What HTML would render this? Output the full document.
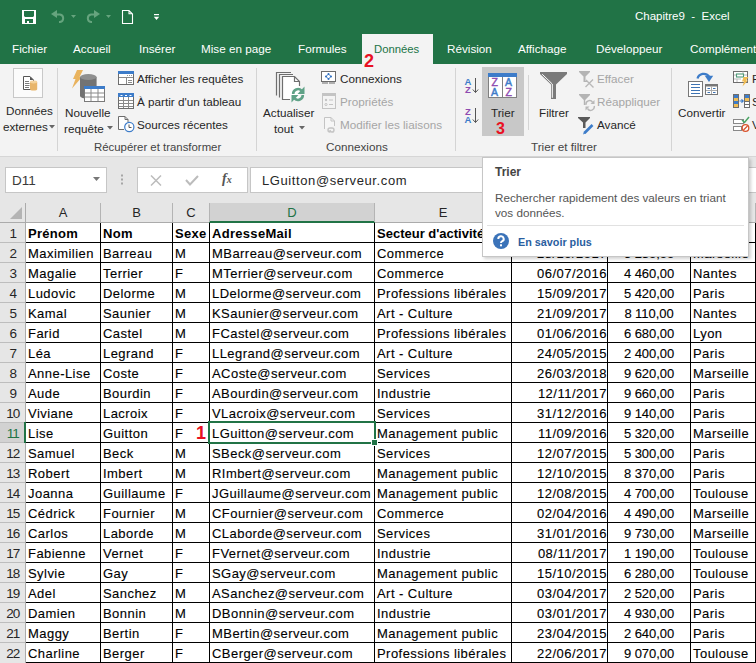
<!DOCTYPE html>
<html><head><meta charset="utf-8">
<style>
*{margin:0;padding:0;box-sizing:content-box}
html,body{width:756px;height:663px;overflow:hidden;background:#e6e6e6;font-family:"Liberation Sans",sans-serif}
.a{position:absolute}
.t{position:absolute;white-space:nowrap;font-size:11.7px;color:#262626;line-height:14px}
.tab{position:absolute;top:41px;white-space:nowrap;font-size:11.7px;color:#fff;line-height:16px}
.dis{color:#a6a6a6}
.hdr{position:absolute;background:#e6e6e6}
.vsep{position:absolute;top:203px;width:1px;height:19px;background:#b4b4b4}
.ch{position:absolute;top:203px;height:19px;line-height:20px;text-align:center;font-size:13px}
.rh{position:absolute;left:0;width:24px;height:19px;line-height:22px;text-align:center;font-size:13.5px;letter-spacing:-0.9px;text-indent:1.6px}
.c{position:absolute;white-space:nowrap;height:19px;line-height:20px;font-size:13px;letter-spacing:0.45px;color:#000;-webkit-text-stroke:0.12px #000}
.c.b{font-weight:bold;font-size:13px;-webkit-text-stroke:0}
.c.r{text-align:right;letter-spacing:0.5px}
.c.m{text-align:center;letter-spacing:-0.05px}
.red{position:absolute;color:#e81123;font-weight:bold;line-height:16px;white-space:nowrap}
.gl{position:absolute;white-space:nowrap;font-size:11.7px;color:#444;line-height:14px}
</style></head><body>
<!-- title bar + tabs -->
<div class="a" style="left:0;top:0;width:756px;height:64px;background:#217346"></div>
<!-- save icon -->
<svg class="a" style="left:22px;top:10px" width="14" height="14" viewBox="0 0 14 14">
<rect x="0" y="0" width="14" height="14" fill="#fff"/>
<path d="M2 1 H12 V6 L11 7 H3 L2 6 Z" fill="#217346"/>
<rect x="3" y="9" width="8" height="4" fill="#217346"/>
<rect x="5" y="11" width="2" height="2" fill="#fff"/>
</svg>
<!-- undo -->
<svg class="a" style="left:50px;top:9px" width="28" height="16" viewBox="0 0 28 16">
<path d="M1 5 L7 1 V9 Z" fill="#66a47e"/>
<path d="M5 5.5 H10 A3.8 3.8 0 0 1 10 13 H9" fill="none" stroke="#66a47e" stroke-width="2"/>
<path d="M21 6 H26 L23.5 9 Z" fill="#66a47e"/>
</svg>
<svg class="a" style="left:85px;top:9px" width="28" height="16" viewBox="0 0 28 16">
<g transform="translate(16,0) scale(-1,1)">
<path d="M1 5 L7 1 V9 Z" fill="#66a47e"/>
<path d="M5 5.5 H10 A3.8 3.8 0 0 1 10 13 H9" fill="none" stroke="#66a47e" stroke-width="2"/>
</g>
<path d="M21 6 H26 L23.5 9 Z" fill="#66a47e"/>
</svg>
<!-- new doc -->
<svg class="a" style="left:121px;top:9px" width="13" height="16" viewBox="0 0 13 16">
<path d="M1.5 1.5 H8 L11.5 5 V14.5 H1.5 Z M8 1.5 V4.8 H11.5" fill="none" stroke="#fff" stroke-width="1.1"/>
</svg>
<svg class="a" style="left:153px;top:14px" width="7" height="7" viewBox="0 0 7 7">
<rect x="1" y="0" width="5" height="1.2" fill="#fff"/><path d="M0.8 2.8 H6.2 L3.5 6 Z" fill="#fff"/>
</svg>
<div class="a" style="left:635px;top:9px;font-size:11.5px;color:#fff;white-space:pre;line-height:14px">Chapitre9  -  Excel</div>
<div class="tab" style="left:12px">Fichier</div>
<div class="tab" style="left:73px">Accueil</div>
<div class="tab" style="left:139px">Insérer</div>
<div class="tab" style="left:201px">Mise en page</div>
<div class="tab" style="left:298px">Formules</div>
<div class="a" style="left:362px;top:34px;width:71px;height:30px;background:#f3f3f3"></div>
<div class="tab" style="left:374px;color:#217346;font-size:11.3px">Données</div>
<div class="tab" style="left:447px">Révision</div>
<div class="tab" style="left:518px">Affichage</div>
<div class="tab" style="left:596px">Développeur</div>
<div class="tab" style="left:690px">Compléments</div>

<!-- ribbon -->
<div class="a" style="left:0;top:64px;width:756px;height:92px;background:#f3f3f3"></div>
<div class="a" style="left:0;top:156px;width:756px;height:1px;background:#d6d6d6"></div>
<!-- separators -->
<div class="a" style="left:57px;top:68px;width:1px;height:83px;background:#d4d4d4"></div>
<div class="a" style="left:256px;top:68px;width:1px;height:83px;background:#d4d4d4"></div>
<div class="a" style="left:455px;top:68px;width:1px;height:83px;background:#d4d4d4"></div>
<div class="a" style="left:671px;top:68px;width:1px;height:83px;background:#d4d4d4"></div>
<div class="a" style="left:528px;top:75px;width:1px;height:55px;background:#d4d4d4"></div>

<!-- Données externes -->
<div class="a" style="left:13px;top:68px;width:28px;height:28px;background:#fbfbfb;border:1px solid #c8c8c8"></div>
<svg class="a" style="left:23px;top:76px" width="15" height="15" viewBox="0 0 15 15">
<path d="M0.5 0.5 H7 L10.5 4 V13.5 H0.5 Z" fill="#fff" stroke="#555" stroke-width="1"/>
<path d="M7 0.5 V4 H10.5 Z" fill="#555"/>
<path d="M2 5.5 H6 M2 7.5 H6.5 M2 9.5 H6.5 M2 11.5 H6" stroke="#7a7a7a" stroke-width="1"/>
<path d="M7 6 V13.2 A3.6 1.4 0 0 0 14.2 13.2 V6 Z" fill="#e8b56a"/>
<ellipse cx="10.6" cy="6" rx="3.6" ry="1.4" fill="#f4d29b"/>
</svg>
<div class="t" style="left:6px;top:104px">Données</div>
<div class="t" style="left:3px;top:120px">externes</div>
<svg class="a" style="left:49px;top:125px" width="6" height="4"><path d="M0 0 H6 L3 3.5 Z" fill="#666"/></svg>

<!-- Nouvelle requête -->
<svg class="a" style="left:71px;top:69px" width="35" height="35" viewBox="0 0 35 35">
<path d="M6 1 H12 L8.5 8 H11 L1 19.5 L4.5 10 H2 Z" fill="#e9b35e"/>
<path d="M9 8 V27 A8.3 2.8 0 0 0 25.6 27 V8 Z" fill="#737373"/>
<ellipse cx="17.3" cy="8" rx="8.3" ry="3" fill="#8f8f8f"/>
<rect x="13.5" y="17.5" width="20" height="15" fill="#fff" stroke="#7a7a7a" stroke-width="1"/>
<rect x="13" y="17" width="21" height="3" fill="#3d7cc9"/>
<path d="M14 24 H33 M14 28 H33 M20 20 V32 M27 20 V32" stroke="#8a8a8a" stroke-width="1"/>
</svg>
<div class="t" style="left:65px;top:106px">Nouvelle</div>
<div class="t" style="left:64px;top:122px">requête</div>
<svg class="a" style="left:107px;top:126px" width="6" height="4"><path d="M0 0 H6 L3 3.5 Z" fill="#666"/></svg>

<!-- small buttons group 1 -->
<svg class="a" style="left:118px;top:71px" width="16" height="14" viewBox="0 0 16 14">
<rect x="0.5" y="0.5" width="15" height="13" fill="#fff" stroke="#6d6d6d"/>
<rect x="0" y="0" width="16" height="3" fill="#3d7cc9"/>
<path d="M9 4.5 H10 M11 4.5 H12 M13 4.5 H14" stroke="#999"/>
<path d="M1 6.5 H15 M8.5 6.5 V13" stroke="#8a8a8a"/>
<path d="M10 9.5 H14 M10 11.5 H14" stroke="#8a8a8a"/>
</svg>
<div class="t" style="left:137px;top:72px">Afficher les requêtes</div>
<svg class="a" style="left:118px;top:93px" width="16" height="16" viewBox="0 0 16 16">
<rect x="0.5" y="0.5" width="15" height="15" fill="#fff" stroke="#6d6d6d"/>
<rect x="0" y="0" width="16" height="4" fill="#3d7cc9"/>
<path d="M2.5 2.5 H4.5 M7 2.5 H9 M11.5 2.5 H13.5" stroke="#fff"/>
<path d="M1 7.5 H15 M1 10.5 H15 M1 13.5 H15 M5.5 4 V15 M10.5 4 V15" stroke="#8a8a8a"/>
</svg>
<div class="t" style="left:137px;top:95px">À partir d'un tableau</div>
<svg class="a" style="left:118px;top:116px" width="17" height="17" viewBox="0 0 17 17">
<path d="M6 13.5 H0.5 V0.5 H7 L10 3.5 V6" fill="#fff" stroke="#6d6d6d"/>
<path d="M7 0.5 V3.5 H10" fill="none" stroke="#6d6d6d"/>
<circle cx="11.3" cy="11" r="4.6" fill="#fff" stroke="#3d7cc9" stroke-width="1.2"/>
<path d="M11 8.5 V11.5 H13.5" stroke="#555" fill="none"/>
</svg>
<div class="t" style="left:137px;top:118px">Sources récentes</div>
<div class="gl" style="left:94px;top:140px;font-size:11.4px">Récupérer et transformer</div>

<!-- Actualiser tout -->
<svg class="a" style="left:275px;top:71px" width="32" height="32" viewBox="0 0 32 32">
<path d="M1.5 24.5 V1.5 H16" fill="none" stroke="#6f6f6f" stroke-width="1.2"/>
<path d="M4.5 26.5 V3.5 H18" fill="none" stroke="#6f6f6f" stroke-width="1.2"/>
<path d="M7.5 28.5 V5.5 H19.5 L24.5 10.5 V28.5 Z" fill="#fff"/>
<path d="M15 28.5 H7.5 V5.5 H19.5 L24.5 10.5 V15" fill="none" stroke="#6f6f6f" stroke-width="1.2"/>
<path d="M19.5 5.5 V10.5 H24.5" fill="none" stroke="#6f6f6f" stroke-width="1.2"/>
<path d="M18.2 23 A4.8 4.8 0 0 1 26.5 19.6" fill="none" stroke="#5fa287" stroke-width="2.6"/>
<path d="M29.5 15.5 V23 H22.5 Z" fill="#5fa287"/>
<path d="M27.8 24 A4.8 4.8 0 0 1 19.5 27.4" fill="none" stroke="#5fa287" stroke-width="2.6"/>
<path d="M16.5 31.5 V24 H23.5 Z" fill="#5fa287"/>
</svg>
<div class="t" style="left:263px;top:106px">Actualiser</div>
<div class="t" style="left:274px;top:122px">tout</div>
<svg class="a" style="left:299px;top:126px" width="6" height="4"><path d="M0 0 H6 L3 3.5 Z" fill="#666"/></svg>

<svg class="a" style="left:321px;top:71px" width="16" height="14" viewBox="0 0 16 14">
<rect x="0.5" y="0.5" width="14" height="10" fill="#fff" stroke="#6d6d6d"/>
<path d="M1 12 H7 M8 12 H14" stroke="#6d6d6d" stroke-width="1.2"/>
<circle cx="7.5" cy="3" r="1" fill="#2f6fc0"/><circle cx="7.5" cy="8" r="1" fill="#2f6fc0"/>
<circle cx="5" cy="5.5" r="1" fill="#2f6fc0"/><circle cx="10" cy="5.5" r="1" fill="#2f6fc0"/>
<path d="M7.5 3 L10 5.5 L7.5 8 L5 5.5 Z" fill="none" stroke="#2f6fc0" stroke-width="0.9"/>
</svg>
<div class="t" style="left:340px;top:72px">Connexions</div>
<svg class="a" style="left:322px;top:93px" width="14" height="16" viewBox="0 0 14 16">
<rect x="0.5" y="0.5" width="13" height="15" fill="#f4f4f4" stroke="#c4c4c4"/>
<rect x="0" y="0" width="14" height="3" fill="#c4c4c4"/>
<circle cx="4" cy="7" r="1.2" fill="#c4c4c4"/><circle cx="4" cy="11.5" r="1.1" fill="none" stroke="#c4c4c4"/>
<path d="M7 7 H11 M7 11.5 H11" stroke="#c4c4c4" stroke-width="1"/>
</svg>
<div class="t dis" style="left:340px;top:95px">Propriétés</div>
<svg class="a" style="left:323px;top:117px" width="16" height="16" viewBox="0 0 16 16">
<path d="M1.5 12 V0.5 H8 L11.5 4 V9" fill="#f6f6f6" stroke="#c4c4c4"/>
<path d="M8 0.5 V4 H11.5" fill="none" stroke="#c4c4c4"/>
<path d="M5 13 A2 2 0 0 1 7 11 H9 M11 15 H9 A2 2 0 0 1 7 13 M9 11 A2 2 0 0 1 11 13 A2 2 0 0 1 9 15 M5 13 A2 2 0 0 0 7 15" fill="none" stroke="#c4c4c4" stroke-width="1.4"/>
</svg>
<div class="t dis" style="left:340px;top:118px">Modifier les liaisons</div>
<div class="gl" style="left:326px;top:140px">Connexions</div>

<!-- sort icons -->
<svg class="a" style="left:463px;top:77px" width="17" height="17" viewBox="0 0 17 17">
<text x="1.5" y="8" font-family="Liberation Sans" font-weight="bold" font-size="9.5" fill="#3d7cc9">A</text>
<text x="2" y="16" font-family="Liberation Sans" font-weight="bold" font-size="9.5" fill="#8f4bb0">Z</text>
<path d="M12.5 1 V15.5 M9.8 12.5 L12.5 15.5 L15.2 12.5" fill="none" stroke="#555" stroke-width="1"/>
</svg>
<svg class="a" style="left:463px;top:107px" width="17" height="17" viewBox="0 0 17 17">
<text x="2" y="8" font-family="Liberation Sans" font-weight="bold" font-size="9.5" fill="#8f4bb0">Z</text>
<text x="1.5" y="16" font-family="Liberation Sans" font-weight="bold" font-size="9.5" fill="#3d7cc9">A</text>
<path d="M12.5 1 V15.5 M9.8 12.5 L12.5 15.5 L15.2 12.5" fill="none" stroke="#555" stroke-width="1"/>
</svg>
<!-- Trier highlighted -->
<div class="a" style="left:482px;top:67px;width:42px;height:69px;background:#c8c8c8"></div>
<svg class="a" style="left:488px;top:73px" width="29" height="25" viewBox="0 0 29 25">
<rect x="0.5" y="0.5" width="28" height="24" fill="#fff" stroke="#808080"/>
<rect x="0" y="0" width="29" height="4" fill="#3d7cc9"/>
<path d="M14.5 4 V25" stroke="#808080"/>
<text x="3.5" y="13" font-family="Liberation Sans" font-size="10.5" fill="#8f4bb0" stroke="#8f4bb0" stroke-width="0.45">Z</text>
<text x="3" y="23" font-family="Liberation Sans" font-size="10.5" fill="#3d7cc9" stroke="#3d7cc9" stroke-width="0.45">A</text>
<text x="17" y="13" font-family="Liberation Sans" font-size="10.5" fill="#3d7cc9" stroke="#3d7cc9" stroke-width="0.45">A</text>
<text x="17.5" y="23" font-family="Liberation Sans" font-size="10.5" fill="#8f4bb0" stroke="#8f4bb0" stroke-width="0.45">Z</text>
</svg>
<div class="t" style="left:491px;top:106px">Trier</div>

<!-- Filtrer -->
<svg class="a" style="left:540px;top:72px" width="27" height="27" viewBox="0 0 27 27">
<path d="M0 0 H27 V2 L16 12.5 V27 H11 V12.5 L0 2 Z" fill="#7a7a7a"/>
<path d="M2.2 2.2 L12.3 12 V25.8" fill="none" stroke="#fff" stroke-width="1"/>
</svg>
<div class="t" style="left:539px;top:106px">Filtrer</div>
<svg class="a" style="left:579px;top:71px" width="17" height="18" viewBox="0 0 17 18">
<path d="M0 0 H11 V1 L6.5 5.5 V10 H8 V11 H4.5 V5.5 L0 1 Z" fill="#b4b4b4"/>
<path d="M7 9 L14.5 16.5 M14 8.5 L6.5 16" stroke="#b8b8b8" stroke-width="1.4"/>
</svg>
<div class="t dis" style="left:597px;top:72px">Effacer</div>
<svg class="a" style="left:579px;top:94px" width="17" height="18" viewBox="0 0 17 18">
<path d="M0 0 H11 V1 L6.2 6 V11 H4.8 V6 L0 1 Z" fill="#b4b4b4"/>
<path d="M7 10.8 A3.6 3.6 0 0 1 13.6 8.3" fill="none" stroke="#b8b8b8" stroke-width="1.5"/>
<path d="M15.2 12 A3.6 3.6 0 0 1 8.6 14.6" fill="none" stroke="#b8b8b8" stroke-width="1.5"/>
<path d="M11.5 10 H15.5 V6 Z M10.5 12.6 H6.5 V16.6 Z" fill="#b8b8b8"/>
</svg>
<div class="t dis" style="left:597px;top:95px">Réappliquer</div>
<svg class="a" style="left:578px;top:117px" width="17" height="18" viewBox="0 0 17 18">
<path d="M0 0 H12 V1 L7.5 5.5 V11 H5 V5.5 L0 1 Z" fill="#5a5a5a"/>
<path d="M6.5 16 L14.5 8" stroke="#3d7cc9" stroke-width="2.6"/>
<path d="M5 17.5 L6 14.5 L7.8 16.3 Z" fill="#3d7cc9"/>
</svg>
<div class="t" style="left:597px;top:118px">Avancé</div>
<div class="gl" style="left:531px;top:140px">Trier et filtrer</div>

<!-- Convertir -->
<svg class="a" style="left:688px;top:72px" width="31" height="26" viewBox="0 0 31 26">
<path d="M9.5 6.5 A6.5 6.5 0 0 1 21 4.5" fill="none" stroke="#3d7cc9" stroke-width="2.3"/>
<path d="M16.8 3.8 H25.2 L21 10 Z" fill="#3d7cc9"/>
<rect x="0.5" y="9.5" width="14" height="15" fill="#fff" stroke="#777"/>
<path d="M3 12.5 H12 M3 15.5 H12 M3 18.5 H12 M3 21.5 H12" stroke="#3d73b3" stroke-width="1"/>
<rect x="17.5" y="12.5" width="12" height="10" fill="#fff" stroke="#777"/>
<rect x="17" y="12" width="13" height="2.5" fill="#777"/>
<path d="M23.5 14.5 V22 M18 18.5 H29" stroke="#aaa" stroke-width="1"/>
<path d="M19.5 16.5 H22 M25 16.5 H27.5 M19.5 20.5 H22 M25 20.5 H27.5" stroke="#3d73b3" stroke-width="1"/>
</svg>
<div class="t" style="left:678px;top:106px">Convertir</div>
<svg class="a" style="left:733px;top:71px" width="17" height="16" viewBox="0 0 17 16">
<rect x="0.5" y="0.5" width="14" height="11" fill="#fff" stroke="#6d6d6d"/>
<path d="M1 4 H14 M1 8 H8 M10 0.5 V3 M4 8 V11" stroke="#bbb" stroke-width="1"/>
<rect x="3.5" y="3" width="7" height="3" fill="#fff" stroke="#4f9a78" stroke-width="1.1"/>
<path d="M10.5 6 H15.5 L13 9.5 H15 L9.5 15.5 L11 10.5 H9 Z" fill="#f0bd55"/>
</svg>
<svg class="a" style="left:733px;top:94px" width="17" height="14" viewBox="0 0 17 14">
<rect x="0.5" y="0.5" width="5" height="13" fill="#fff" stroke="#6d6d6d"/>
<rect x="1" y="1" width="4" height="3" fill="#3d7cc9"/><rect x="1" y="4" width="4" height="3" fill="#f0bd55"/><rect x="1" y="7" width="4" height="3" fill="#3d7cc9"/><rect x="1" y="10" width="4" height="3" fill="#f0bd55"/>
<rect x="11.5" y="0.5" width="5" height="13" fill="#fff" stroke="#6d6d6d"/>
<rect x="12" y="1" width="4" height="3" fill="#3d7cc9"/><rect x="12" y="4" width="4" height="3" fill="#f0bd55"/>
<path d="M12 7.5 H16 M12 10.5 H16" stroke="#6d6d6d"/>
<path d="M6.5 7 H10 M8.5 5.3 L10.2 7 L8.5 8.7" stroke="#3d7cc9" stroke-width="1.2" fill="none"/>
</svg>
<svg class="a" style="left:733px;top:116px" width="17" height="16" viewBox="0 0 17 16">
<rect x="0.5" y="3.5" width="10" height="4" fill="#fff" stroke="#888"/>
<rect x="0.5" y="10.5" width="8" height="4" fill="#fff" stroke="#888"/>
<path d="M9 4 L11.5 6.5 L16 1" fill="none" stroke="#4aa564" stroke-width="1.5"/>
<circle cx="12.5" cy="12" r="3.3" fill="#fff" stroke="#d9532c" stroke-width="1.3"/>
<path d="M10.5 14 L14.5 10" stroke="#d9532c" stroke-width="1.3"/>
</svg>
<div class="t" style="left:752px;top:72px">R</div>
<div class="t" style="left:752px;top:95px">S</div>
<div class="t" style="left:752px;top:118px">V</div>

<!-- formula bar -->
<div class="a" style="left:5px;top:167px;width:100px;height:24px;background:#fff;border:1px solid #c6c6c6"></div>
<div class="a" style="left:12px;top:174px;font-size:13.5px;color:#3a3a3a;line-height:14px">D11</div>
<svg class="a" style="left:93px;top:177px" width="8" height="5"><path d="M0 0 H7 L3.5 4 Z" fill="#777"/></svg>
<svg class="a" style="left:121px;top:174px" width="3" height="12"><rect x="0" y="0.5" width="2" height="2" fill="#a6a6a6"/><rect x="0" y="4.5" width="2" height="2" fill="#a6a6a6"/><rect x="0" y="8.5" width="2" height="2" fill="#a6a6a6"/></svg>
<div class="a" style="left:137px;top:167px;width:109px;height:24px;background:#fff;border:1px solid #c6c6c6"></div>
<svg class="a" style="left:150px;top:175px" width="12" height="11"><path d="M1 0.5 L11 10.5 M11 0.5 L1 10.5" stroke="#bcbcbc" stroke-width="1.5"/></svg>
<svg class="a" style="left:185px;top:175px" width="14" height="11"><path d="M1 5 L5 9.5 L13 1" fill="none" stroke="#bcbcbc" stroke-width="2"/></svg>
<div class="a" style="left:222px;top:172px;font-family:'Liberation Serif',serif;font-style:italic;font-weight:bold;font-size:14px;color:#555;line-height:14px">f<span style="font-size:10px">x</span></div>
<div class="a" style="left:250px;top:167px;width:506px;height:24px;background:#fff;border:1px solid #c6c6c6;border-right:none"></div>
<div class="a" style="left:262px;top:174px;font-size:13px;letter-spacing:0.6px;color:#262626;line-height:14px;white-space:nowrap">LGuitton@serveur.com</div>

<div class="hdr" style="left:0;top:203px;width:756px;height:19px"></div>
<div style="position:absolute;left:210px;top:203px;width:164px;height:18px;background:#d2d2d2"></div>
<div style="position:absolute;left:209px;top:221px;width:166px;height:2px;background:#217346"></div>
<div class="ch" style="left:26px;width:74px;color:#262626">A</div>
<div class="vsep" style="left:100px"></div>
<div class="ch" style="left:101px;width:71px;color:#262626">B</div>
<div class="vsep" style="left:172px"></div>
<div class="ch" style="left:173px;width:36px;color:#262626">C</div>
<div class="vsep" style="left:209px"></div>
<div class="ch" style="left:210px;width:164px;color:#217346">D</div>
<div class="vsep" style="left:374px"></div>
<div class="ch" style="left:375px;width:136px;color:#262626">E</div>
<div class="vsep" style="left:511px"></div>
<div class="ch" style="left:512px;width:95px;color:#262626">F</div>
<div class="vsep" style="left:607px"></div>
<div class="ch" style="left:608px;width:82px;color:#262626">G</div>
<div class="vsep" style="left:690px"></div>
<div class="ch" style="left:691px;width:64px;color:#262626">H</div>
<div class="vsep" style="left:755px"></div>
<div class="vsep" style="left:25px"></div>
<div style="position:absolute;left:0;top:222px;width:209px;height:1px;background:#ababab"></div>
<div style="position:absolute;left:375px;top:222px;width:381px;height:1px;background:#ababab"></div>
<svg style="position:absolute;left:10px;top:207px" width="13" height="13"><path d="M12 0 L12 12 L0 12 Z" fill="#b4b4b4"/></svg>
<div class="hdr" style="left:0;top:223px;width:25px;height:440px"></div>
<div class="rh" style="top:223px;color:#262626">1</div>
<div class="rh" style="top:243px;color:#262626">2</div>
<div style="position:absolute;left:0;top:242px;width:25px;height:1px;background:#bdbdbd"></div>
<div class="rh" style="top:263px;color:#262626">3</div>
<div style="position:absolute;left:0;top:262px;width:25px;height:1px;background:#bdbdbd"></div>
<div class="rh" style="top:283px;color:#262626">4</div>
<div style="position:absolute;left:0;top:282px;width:25px;height:1px;background:#bdbdbd"></div>
<div class="rh" style="top:303px;color:#262626">5</div>
<div style="position:absolute;left:0;top:302px;width:25px;height:1px;background:#bdbdbd"></div>
<div class="rh" style="top:323px;color:#262626">6</div>
<div style="position:absolute;left:0;top:322px;width:25px;height:1px;background:#bdbdbd"></div>
<div class="rh" style="top:343px;color:#262626">7</div>
<div style="position:absolute;left:0;top:342px;width:25px;height:1px;background:#bdbdbd"></div>
<div class="rh" style="top:363px;color:#262626">8</div>
<div style="position:absolute;left:0;top:362px;width:25px;height:1px;background:#bdbdbd"></div>
<div class="rh" style="top:383px;color:#262626">9</div>
<div style="position:absolute;left:0;top:382px;width:25px;height:1px;background:#bdbdbd"></div>
<div class="rh" style="top:403px;color:#262626">10</div>
<div style="position:absolute;left:0;top:402px;width:25px;height:1px;background:#bdbdbd"></div>
<div style="position:absolute;left:0;top:423px;width:24px;height:19px;background:#d2d2d2"></div>
<div class="rh" style="top:423px;color:#217346">11</div>
<div style="position:absolute;left:0;top:422px;width:25px;height:1px;background:#bdbdbd"></div>
<div class="rh" style="top:443px;color:#262626">12</div>
<div style="position:absolute;left:0;top:442px;width:25px;height:1px;background:#bdbdbd"></div>
<div class="rh" style="top:463px;color:#262626">13</div>
<div style="position:absolute;left:0;top:462px;width:25px;height:1px;background:#bdbdbd"></div>
<div class="rh" style="top:483px;color:#262626">14</div>
<div style="position:absolute;left:0;top:482px;width:25px;height:1px;background:#bdbdbd"></div>
<div class="rh" style="top:503px;color:#262626">15</div>
<div style="position:absolute;left:0;top:502px;width:25px;height:1px;background:#bdbdbd"></div>
<div class="rh" style="top:523px;color:#262626">16</div>
<div style="position:absolute;left:0;top:522px;width:25px;height:1px;background:#bdbdbd"></div>
<div class="rh" style="top:543px;color:#262626">17</div>
<div style="position:absolute;left:0;top:542px;width:25px;height:1px;background:#bdbdbd"></div>
<div class="rh" style="top:563px;color:#262626">18</div>
<div style="position:absolute;left:0;top:562px;width:25px;height:1px;background:#bdbdbd"></div>
<div class="rh" style="top:583px;color:#262626">19</div>
<div style="position:absolute;left:0;top:582px;width:25px;height:1px;background:#bdbdbd"></div>
<div class="rh" style="top:603px;color:#262626">20</div>
<div style="position:absolute;left:0;top:602px;width:25px;height:1px;background:#bdbdbd"></div>
<div class="rh" style="top:623px;color:#262626">21</div>
<div style="position:absolute;left:0;top:622px;width:25px;height:1px;background:#bdbdbd"></div>
<div class="rh" style="top:643px;color:#262626">22</div>
<div style="position:absolute;left:0;top:642px;width:25px;height:1px;background:#bdbdbd"></div>
<div style="position:absolute;left:25px;top:203px;width:1px;height:460px;background:#ababab"></div>
<div style="position:absolute;left:24px;top:422px;width:2px;height:21px;background:#217346"></div>
<div style="position:absolute;left:26px;top:223px;width:730px;height:440px;background:#fff"></div>
<div style="position:absolute;left:26px;top:242px;width:730px;height:1px;background:#000"></div>
<div style="position:absolute;left:26px;top:262px;width:730px;height:1px;background:#000"></div>
<div style="position:absolute;left:26px;top:282px;width:730px;height:1px;background:#000"></div>
<div style="position:absolute;left:26px;top:302px;width:730px;height:1px;background:#000"></div>
<div style="position:absolute;left:26px;top:322px;width:730px;height:1px;background:#000"></div>
<div style="position:absolute;left:26px;top:342px;width:730px;height:1px;background:#000"></div>
<div style="position:absolute;left:26px;top:362px;width:730px;height:1px;background:#000"></div>
<div style="position:absolute;left:26px;top:382px;width:730px;height:1px;background:#000"></div>
<div style="position:absolute;left:26px;top:402px;width:730px;height:1px;background:#000"></div>
<div style="position:absolute;left:26px;top:422px;width:730px;height:1px;background:#000"></div>
<div style="position:absolute;left:26px;top:442px;width:730px;height:1px;background:#000"></div>
<div style="position:absolute;left:26px;top:462px;width:730px;height:1px;background:#000"></div>
<div style="position:absolute;left:26px;top:482px;width:730px;height:1px;background:#000"></div>
<div style="position:absolute;left:26px;top:502px;width:730px;height:1px;background:#000"></div>
<div style="position:absolute;left:26px;top:522px;width:730px;height:1px;background:#000"></div>
<div style="position:absolute;left:26px;top:542px;width:730px;height:1px;background:#000"></div>
<div style="position:absolute;left:26px;top:562px;width:730px;height:1px;background:#000"></div>
<div style="position:absolute;left:26px;top:582px;width:730px;height:1px;background:#000"></div>
<div style="position:absolute;left:26px;top:602px;width:730px;height:1px;background:#000"></div>
<div style="position:absolute;left:26px;top:622px;width:730px;height:1px;background:#000"></div>
<div style="position:absolute;left:26px;top:642px;width:730px;height:1px;background:#000"></div>
<div style="position:absolute;left:26px;top:662px;width:730px;height:1px;background:#000"></div>
<div style="position:absolute;left:100px;top:223px;width:1px;height:440px;background:#000"></div>
<div style="position:absolute;left:172px;top:223px;width:1px;height:440px;background:#000"></div>
<div style="position:absolute;left:209px;top:223px;width:1px;height:440px;background:#000"></div>
<div style="position:absolute;left:374px;top:223px;width:1px;height:440px;background:#000"></div>
<div style="position:absolute;left:511px;top:223px;width:1px;height:440px;background:#000"></div>
<div style="position:absolute;left:607px;top:223px;width:1px;height:440px;background:#000"></div>
<div style="position:absolute;left:690px;top:223px;width:1px;height:440px;background:#000"></div>
<div style="position:absolute;left:755px;top:223px;width:1px;height:440px;background:#000"></div>
<div class="c b" style="letter-spacing:0.3px;left:28px;top:224px">Prénom</div>
<div class="c b" style="letter-spacing:0.3px;left:103px;top:224px">Nom</div>
<div class="c b" style="letter-spacing:0.3px;left:175px;top:224px">Sexe</div>
<div class="c b" style="letter-spacing:0.3px;left:212px;top:224px">AdresseMail</div>
<div class="c b" style="letter-spacing:0.0px;left:377px;top:224px">Secteur d'activité</div>
<div class="c" style="left:28px;top:244px">Maximilien</div>
<div class="c" style="left:103px;top:244px">Barreau</div>
<div class="c" style="left:175px;top:244px">M</div>
<div class="c" style="left:212px;top:244px">MBarreau@serveur.com</div>
<div class="c" style="left:377px;top:244px">Commerce</div>
<div class="c r" style="left:512px;top:244px;width:95px">28/10/2017</div>
<div class="c m" style="left:608px;top:244px;width:82px">5 230,00</div>
<div class="c" style="left:693px;top:244px">Marseille</div>
<div class="c" style="left:28px;top:264px">Magalie</div>
<div class="c" style="left:103px;top:264px">Terrier</div>
<div class="c" style="left:175px;top:264px">F</div>
<div class="c" style="left:212px;top:264px">MTerrier@serveur.com</div>
<div class="c" style="left:377px;top:264px">Commerce</div>
<div class="c r" style="left:512px;top:264px;width:95px">06/07/2016</div>
<div class="c m" style="left:608px;top:264px;width:82px">4 460,00</div>
<div class="c" style="left:693px;top:264px">Nantes</div>
<div class="c" style="left:28px;top:284px">Ludovic</div>
<div class="c" style="left:103px;top:284px">Delorme</div>
<div class="c" style="left:175px;top:284px">M</div>
<div class="c" style="left:212px;top:284px">LDelorme@serveur.com</div>
<div class="c" style="left:377px;top:284px">Professions libérales</div>
<div class="c r" style="left:512px;top:284px;width:95px">15/09/2017</div>
<div class="c m" style="left:608px;top:284px;width:82px">5 420,00</div>
<div class="c" style="left:693px;top:284px">Paris</div>
<div class="c" style="left:28px;top:304px">Kamal</div>
<div class="c" style="left:103px;top:304px">Saunier</div>
<div class="c" style="left:175px;top:304px">M</div>
<div class="c" style="left:212px;top:304px">KSaunier@serveur.com</div>
<div class="c" style="left:377px;top:304px">Art - Culture</div>
<div class="c r" style="left:512px;top:304px;width:95px">21/09/2017</div>
<div class="c m" style="left:608px;top:304px;width:82px">8 110,00</div>
<div class="c" style="left:693px;top:304px">Nantes</div>
<div class="c" style="left:28px;top:324px">Farid</div>
<div class="c" style="left:103px;top:324px">Castel</div>
<div class="c" style="left:175px;top:324px">M</div>
<div class="c" style="left:212px;top:324px">FCastel@serveur.com</div>
<div class="c" style="left:377px;top:324px">Professions libérales</div>
<div class="c r" style="left:512px;top:324px;width:95px">01/06/2016</div>
<div class="c m" style="left:608px;top:324px;width:82px">6 680,00</div>
<div class="c" style="left:693px;top:324px">Lyon</div>
<div class="c" style="left:28px;top:344px">Léa</div>
<div class="c" style="left:103px;top:344px">Legrand</div>
<div class="c" style="left:175px;top:344px">F</div>
<div class="c" style="left:212px;top:344px">LLegrand@serveur.com</div>
<div class="c" style="left:377px;top:344px">Art - Culture</div>
<div class="c r" style="left:512px;top:344px;width:95px">24/05/2015</div>
<div class="c m" style="left:608px;top:344px;width:82px">2 400,00</div>
<div class="c" style="left:693px;top:344px">Paris</div>
<div class="c" style="left:28px;top:364px">Anne-Lise</div>
<div class="c" style="left:103px;top:364px">Coste</div>
<div class="c" style="left:175px;top:364px">F</div>
<div class="c" style="left:212px;top:364px">ACoste@serveur.com</div>
<div class="c" style="left:377px;top:364px">Services</div>
<div class="c r" style="left:512px;top:364px;width:95px">26/03/2018</div>
<div class="c m" style="left:608px;top:364px;width:82px">9 620,00</div>
<div class="c" style="left:693px;top:364px">Marseille</div>
<div class="c" style="left:28px;top:384px">Aude</div>
<div class="c" style="left:103px;top:384px">Bourdin</div>
<div class="c" style="left:175px;top:384px">F</div>
<div class="c" style="left:212px;top:384px">ABourdin@serveur.com</div>
<div class="c" style="left:377px;top:384px">Industrie</div>
<div class="c r" style="left:512px;top:384px;width:95px">12/11/2017</div>
<div class="c m" style="left:608px;top:384px;width:82px">9 660,00</div>
<div class="c" style="left:693px;top:384px">Paris</div>
<div class="c" style="left:28px;top:404px">Viviane</div>
<div class="c" style="left:103px;top:404px">Lacroix</div>
<div class="c" style="left:175px;top:404px">F</div>
<div class="c" style="left:212px;top:404px">VLacroix@serveur.com</div>
<div class="c" style="left:377px;top:404px">Services</div>
<div class="c r" style="left:512px;top:404px;width:95px">31/12/2016</div>
<div class="c m" style="left:608px;top:404px;width:82px">9 140,00</div>
<div class="c" style="left:693px;top:404px">Paris</div>
<div class="c" style="left:28px;top:424px">Lise</div>
<div class="c" style="left:103px;top:424px">Guitton</div>
<div class="c" style="left:175px;top:424px">F</div>
<div class="c" style="left:212px;top:424px">LGuitton@serveur.com</div>
<div class="c" style="left:377px;top:424px">Management public</div>
<div class="c r" style="left:512px;top:424px;width:95px">11/09/2016</div>
<div class="c m" style="left:608px;top:424px;width:82px">5 320,00</div>
<div class="c" style="left:693px;top:424px">Marseille</div>
<div class="c" style="left:28px;top:444px">Samuel</div>
<div class="c" style="left:103px;top:444px">Beck</div>
<div class="c" style="left:175px;top:444px">M</div>
<div class="c" style="left:212px;top:444px">SBeck@serveur.com</div>
<div class="c" style="left:377px;top:444px">Services</div>
<div class="c r" style="left:512px;top:444px;width:95px">12/07/2015</div>
<div class="c m" style="left:608px;top:444px;width:82px">5 300,00</div>
<div class="c" style="left:693px;top:444px">Paris</div>
<div class="c" style="left:28px;top:464px">Robert</div>
<div class="c" style="left:103px;top:464px">Imbert</div>
<div class="c" style="left:175px;top:464px">M</div>
<div class="c" style="left:212px;top:464px">RImbert@serveur.com</div>
<div class="c" style="left:377px;top:464px">Management public</div>
<div class="c r" style="left:512px;top:464px;width:95px">12/10/2015</div>
<div class="c m" style="left:608px;top:464px;width:82px">8 370,00</div>
<div class="c" style="left:693px;top:464px">Paris</div>
<div class="c" style="left:28px;top:484px">Joanna</div>
<div class="c" style="left:103px;top:484px">Guillaume</div>
<div class="c" style="left:175px;top:484px">F</div>
<div class="c" style="left:212px;top:484px">JGuillaume@serveur.com</div>
<div class="c" style="left:377px;top:484px">Management public</div>
<div class="c r" style="left:512px;top:484px;width:95px">12/08/2015</div>
<div class="c m" style="left:608px;top:484px;width:82px">4 700,00</div>
<div class="c" style="left:693px;top:484px">Toulouse</div>
<div class="c" style="left:28px;top:504px">Cédrick</div>
<div class="c" style="left:103px;top:504px">Fournier</div>
<div class="c" style="left:175px;top:504px">M</div>
<div class="c" style="left:212px;top:504px">CFournier@serveur.com</div>
<div class="c" style="left:377px;top:504px">Commerce</div>
<div class="c r" style="left:512px;top:504px;width:95px">02/04/2016</div>
<div class="c m" style="left:608px;top:504px;width:82px">4 490,00</div>
<div class="c" style="left:693px;top:504px">Marseille</div>
<div class="c" style="left:28px;top:524px">Carlos</div>
<div class="c" style="left:103px;top:524px">Laborde</div>
<div class="c" style="left:175px;top:524px">M</div>
<div class="c" style="left:212px;top:524px">CLaborde@serveur.com</div>
<div class="c" style="left:377px;top:524px">Services</div>
<div class="c r" style="left:512px;top:524px;width:95px">31/01/2016</div>
<div class="c m" style="left:608px;top:524px;width:82px">9 730,00</div>
<div class="c" style="left:693px;top:524px">Marseille</div>
<div class="c" style="left:28px;top:544px">Fabienne</div>
<div class="c" style="left:103px;top:544px">Vernet</div>
<div class="c" style="left:175px;top:544px">F</div>
<div class="c" style="left:212px;top:544px">FVernet@serveur.com</div>
<div class="c" style="left:377px;top:544px">Industrie</div>
<div class="c r" style="left:512px;top:544px;width:95px">08/11/2017</div>
<div class="c m" style="left:608px;top:544px;width:82px">1 190,00</div>
<div class="c" style="left:693px;top:544px">Toulouse</div>
<div class="c" style="left:28px;top:564px">Sylvie</div>
<div class="c" style="left:103px;top:564px">Gay</div>
<div class="c" style="left:175px;top:564px">F</div>
<div class="c" style="left:212px;top:564px">SGay@serveur.com</div>
<div class="c" style="left:377px;top:564px">Management public</div>
<div class="c r" style="left:512px;top:564px;width:95px">15/10/2015</div>
<div class="c m" style="left:608px;top:564px;width:82px">6 280,00</div>
<div class="c" style="left:693px;top:564px">Toulouse</div>
<div class="c" style="left:28px;top:584px">Adel</div>
<div class="c" style="left:103px;top:584px">Sanchez</div>
<div class="c" style="left:175px;top:584px">M</div>
<div class="c" style="left:212px;top:584px">ASanchez@serveur.com</div>
<div class="c" style="left:377px;top:584px">Art - Culture</div>
<div class="c r" style="left:512px;top:584px;width:95px">03/04/2017</div>
<div class="c m" style="left:608px;top:584px;width:82px">2 520,00</div>
<div class="c" style="left:693px;top:584px">Paris</div>
<div class="c" style="left:28px;top:604px">Damien</div>
<div class="c" style="left:103px;top:604px">Bonnin</div>
<div class="c" style="left:175px;top:604px">M</div>
<div class="c" style="left:212px;top:604px">DBonnin@serveur.com</div>
<div class="c" style="left:377px;top:604px">Industrie</div>
<div class="c r" style="left:512px;top:604px;width:95px">03/01/2017</div>
<div class="c m" style="left:608px;top:604px;width:82px">4 930,00</div>
<div class="c" style="left:693px;top:604px">Paris</div>
<div class="c" style="left:28px;top:624px">Maggy</div>
<div class="c" style="left:103px;top:624px">Bertin</div>
<div class="c" style="left:175px;top:624px">F</div>
<div class="c" style="left:212px;top:624px">MBertin@serveur.com</div>
<div class="c" style="left:377px;top:624px">Management public</div>
<div class="c r" style="left:512px;top:624px;width:95px">23/04/2015</div>
<div class="c m" style="left:608px;top:624px;width:82px">2 640,00</div>
<div class="c" style="left:693px;top:624px">Paris</div>
<div class="c" style="left:28px;top:644px">Charline</div>
<div class="c" style="left:103px;top:644px">Berger</div>
<div class="c" style="left:175px;top:644px">F</div>
<div class="c" style="left:212px;top:644px">CBerger@serveur.com</div>
<div class="c" style="left:377px;top:644px">Professions libérales</div>
<div class="c r" style="left:512px;top:644px;width:95px">22/06/2017</div>
<div class="c m" style="left:608px;top:644px;width:82px">9 070,00</div>
<div class="c" style="left:693px;top:644px">Toulouse</div>
<div style="position:absolute;left:208px;top:421px;width:164px;height:19px;border:2px solid #217346;border-right:none;border-bottom:none"></div>
<div style="position:absolute;left:374px;top:421px;width:2px;height:18px;background:#217346"></div>
<div style="position:absolute;left:208px;top:442px;width:163px;height:2px;background:#217346"></div>
<div style="position:absolute;left:372px;top:440px;width:5px;height:5px;background:#217346;outline:1px solid #fff"></div>
<div class="red" style="left:196px;top:424px;font-size:18px;line-height:18px">1</div>

<!-- tooltip -->
<div class="a" style="left:482px;top:157px;width:265px;height:98px;background:#fff;border:1px solid #c6c6c6;box-shadow:2px 2px 3px rgba(0,0,0,0.18)"></div>
<div class="a" style="left:495px;top:165px;font-size:12px;font-weight:bold;color:#444;line-height:14px">Trier</div>
<div class="a" style="left:495px;top:190px;font-size:11.7px;color:#555;line-height:15px;white-space:nowrap">Rechercher rapidement des valeurs en triant<br>vos données.</div>
<div class="a" style="left:487px;top:225px;width:257px;height:1px;background:#e1e1e1"></div>
<svg class="a" style="left:493px;top:233px" width="16" height="16" viewBox="0 0 16 16">
<circle cx="8" cy="8" r="8" fill="#3b73b9"/>
<path d="M5.3 6 A2.7 2.6 0 1 1 9 8.3 Q8 8.8 8 10" fill="none" stroke="#fff" stroke-width="2"/>
<rect x="7" y="11.3" width="2" height="2" fill="#fff"/>
</svg>
<div class="a" style="left:518px;top:235px;font-size:10.8px;font-weight:bold;color:#2a5ea0;line-height:14px;white-space:nowrap">En savoir plus</div>
<div class="red" style="left:364px;top:52px;font-size:18px;line-height:18px">2</div>
<div class="red" style="left:496px;top:121px;font-size:16px;line-height:16px">3</div>
</body></html>
